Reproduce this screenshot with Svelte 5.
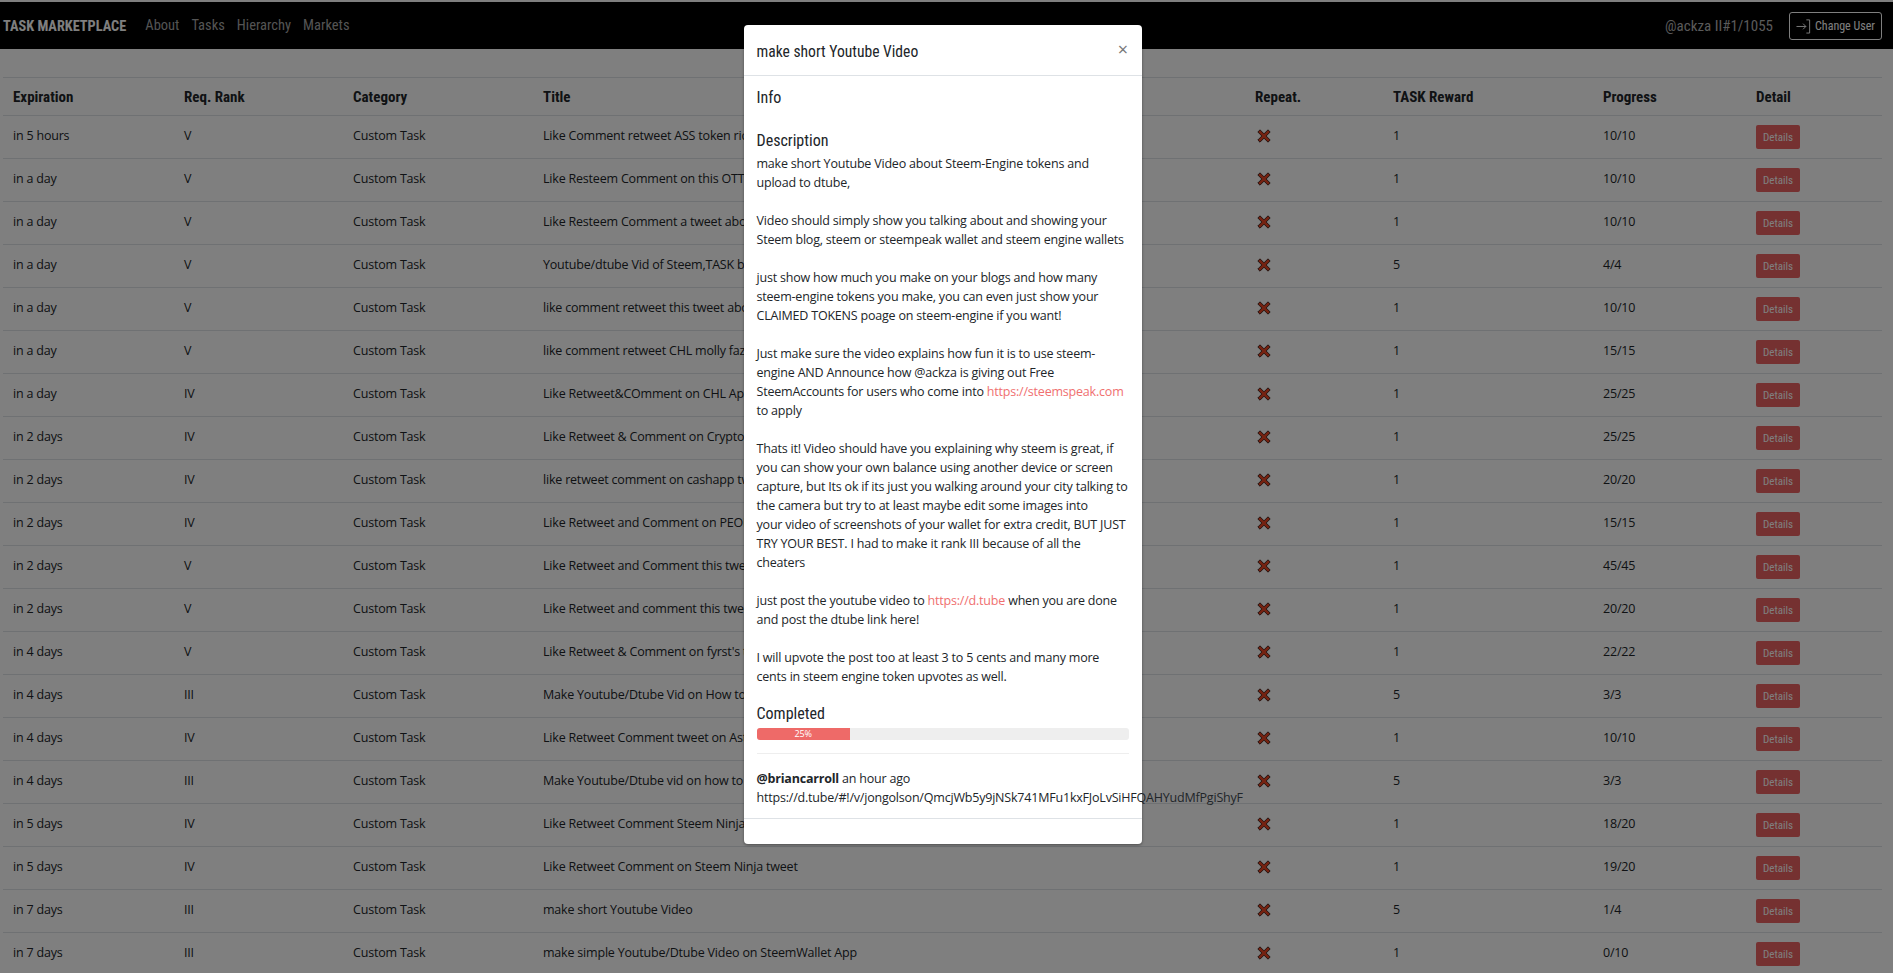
<script>
  const rows = [
    ['in 5 hours', 'V', 'Like Comment retweet ASS token rich list', '1', '10/10'],
    ['in a day', 'V', 'Like Resteem Comment on this OTTP post', '1', '10/10'],
    ['in a day', 'V', 'Like Resteem Comment a tweet about steem', '1', '10/10'],
    ['in a day', 'V', 'Youtube/dtube Vid of Steem,TASK blog', '5', '4/4'],
    ['in a day', 'V', 'like comment retweet this tweet about', '1', '10/10'],
    ['in a day', 'V', 'like comment retweet CHL molly fazio', '1', '15/15'],
    ['in a day', 'IV', 'Like Retweet&COmment on CHL App tweet', '1', '25/25'],
    ['in 2 days', 'IV', 'Like Retweet & Comment on CryptoTweet', '1', '25/25'],
    ['in 2 days', 'IV', 'like retweet comment on cashapp tweet', '1', '20/20'],
    ['in 2 days', 'IV', 'Like Retweet and Comment on PEOPLE', '1', '15/15'],
    ['in 2 days', 'V', 'Like Retweet and Comment this tweet', '1', '45/45'],
    ['in 2 days', 'V', 'Like Retweet and comment this tweet', '1', '20/20'],
    ['in 4 days', 'V', "Like Retweet & Comment on fyrst's tweet", '1', '22/22'],
    ['in 4 days', 'III', 'Make Youtube/Dtube Vid on How to use', '5', '3/3'],
    ['in 4 days', 'IV', 'Like Retweet Comment tweet on Asteria', '1', '10/10'],
    ['in 4 days', 'III', 'Make Youtube/Dtube vid on how to earn', '5', '3/3'],
    ['in 5 days', 'IV', 'Like Retweet Comment Steem Ninja tweet', '1', '18/20'],
    ['in 5 days', 'IV', 'Like Retweet Comment on Steem Ninja tweet', '1', '19/20'],
    ['in 7 days', 'III', 'make short Youtube Video', '5', '1/4'],
    ['in 7 days', 'III', 'make simple Youtube/Dtube Video on SteemWallet App', '1', '0/10']
  ]
</script>

<div class="page">
  <nav class="topbar">
    <a class="brand" href="#top">TASK MARKETPLACE</a>
    <a class="link" href="#about">About</a>
    <a class="link" href="#tasks">Tasks</a>
    <a class="link" href="#hierarchy">Hierarchy</a>
    <a class="link" href="#markets">Markets</a>
    <span class="user">@ackza II#1/1055</span>
    <button class="change">
      <svg width="16" height="16" viewBox="0 0 16 16" fill="none" stroke="currentColor" stroke-width="1">
        <path d="M.5 8.5h10M7.5 5.5l3 3-3 3M11 1.5h3.5v14H11" />
      </svg>
      Change User
    </button>
  </nav>

  <div class="wrap">
    <table>
      <thead>
        <tr>
          <th class="c1">Expiration</th>
          <th class="c2">Req. Rank</th>
          <th class="c3">Category</th>
          <th class="c4">Title</th>
          <th class="c5">Repeat.</th>
          <th class="c6">TASK Reward</th>
          <th class="c7">Progress</th>
          <th>Detail</th>
        </tr>
      </thead>
      <tbody>
        {#each rows as row}
          <tr>
            <td>{row[0]}</td>
            <td>{row[1]}</td>
            <td>Custom Task</td>
            <td>{row[2]}</td>
            <td>
              <svg class="cross" width="14" height="14" viewBox="0 0 14 14">
                <path d="M3 .8 7 4.8 11 .8 13.2 3 9.2 7l4 4-2.2 2.2-4-4-4 4L.8 11l4-4-4-4z" />
              </svg>
            </td>
            <td>{row[3]}</td>
            <td>{row[4]}</td>
            <td><button class="details">Details</button></td>
          </tr>
        {/each}
      </tbody>
    </table>
  </div>

  <div class="backdrop"></div>

  <div class="modal">
    <header>
      <h5>make short Youtube Video</h5>
      <span class="close">×</span>
    </header>
    <div class="body">
      <h6 class="info">Info</h6>
      <h6>Description</h6>
      <p>make short Youtube Video about Steem-Engine tokens and upload to dtube,<br /><br />Video should simply show you talking about and showing your Steem blog, steem or steempeak wallet and steem engine wallets<br /><br />just show how much you make on your blogs and how many steem-engine tokens you make, you can even just show your CLAIMED TOKENS poage on steem-engine if you want!<br /><br />Just make sure the video explains how fun it is to use steem-engine AND Announce how @ackza is giving out Free SteemAccounts for users who come into <a href="#s">https://steemspeak.com</a> to apply<br /><br />Thats it! Video should have you explaining why steem is great, if you can show your own balance using another device or screen capture, but Its ok if its just you walking around your city talking to the camera but try to at least maybe edit some images into<br />your video of screenshots of your wallet for extra credit, BUT JUST<br />TRY YOUR BEST. I had to make it rank III because of all the<br />cheaters<br /><br />just post the youtube video to <a href="#d">https://d.tube</a> when you are done and post the dtube link here!<br /><br />I will upvote the post too at least 3 to 5 cents and many more cents in steem engine token upvotes as well.</p>
      <h6 class="done">Completed</h6>
      <div class="track"><div class="fill" style="width: 25%">25%</div></div>
      <hr />
      <div class="comment"><b>@briancarroll</b> an hour ago</div>
      <div class="url">https://d.tube/#!/v/jongolson/QmcjWb5y9jNSk741MFu1kxFJoLvSiHFQAHYudMfPgiShyF</div>
    </div>
    <footer></footer>
  </div>
</div>

<style>
  :global(body) {
    margin: 0;
    background: #fff;
    overflow: hidden;
  }

  .page {
    position: relative;
    height: 973px;
    overflow: hidden;
    padding-top: 2px;
    box-sizing: border-box;
    font-family: 'Open Sans', sans-serif;
    font-size: 12.5px;
    letter-spacing: -0.2px;
    color: #212529;
  }

  .topbar {
    display: flex;
    align-items: center;
    height: 47px;
    background: #000;
    padding: 0 11px 0 3px;
    font-family: 'Roboto', sans-serif;
    font-stretch: 75%;
    font-size: 15px;
    letter-spacing: 0;
  }

  .brand {
    color: #fff;
    font-size: 14.3px;
    font-weight: 700;
    text-decoration: none;
    margin-right: 19px;
  }

  .link {
    color: #a8a8a8;
    font-size: 14.5px;
    text-decoration: none;
    margin-right: 12px;
  }

  .user {
    margin-left: auto;
    margin-right: 16px;
    color: #b4b4b4;
  }

  .change {
    display: flex;
    align-items: center;
    gap: 4px;
    width: 93px;
    height: 28px;
    padding: 0 6px;
    background: none;
    border: 1px solid #fff;
    border-radius: 3px;
    color: #fff;
    font: 12px 'Roboto', sans-serif;
    font-stretch: 75%;
    white-space: nowrap;
  }

  .wrap {
    padding: 28px 11px 0 3px;
  }

  table {
    width: 100%;
    border-collapse: collapse;
    table-layout: fixed;
  }

  th {
    height: 37px;
    padding: 0 10px;
    text-align: left;
    font-family: 'Roboto', sans-serif;
    font-stretch: 75%;
    font-size: 15px;
    font-weight: 700;
    letter-spacing: 0;
    border-top: 1px solid #dee2e6;
    border-bottom: 1px solid #dee2e6;
  }

  .c1 { width: 151px; }
  .c2 { width: 149px; }
  .c3 { width: 170px; }
  .c4 { width: 692px; }
  .c5 { width: 118px; }
  .c6 { width: 190px; }
  .c7 { width: 133px; }

  td {
    height: 39px;
    padding: 0 10px 3px;
    border-bottom: 1px solid #dee2e6;
    white-space: nowrap;
    overflow: hidden;
  }

  .cross {
    display: block;
    margin-left: 2px;
    fill: #e84422;
    stroke: #000;
    stroke-width: 0.7;
  }

  .details {
    display: block;
    width: 44px;
    height: 24px;
    padding: 0;
    margin-top: 3px;
    background: #ea6262;
    border: 0;
    border-radius: 2px;
    color: #fff;
    font: 11px 'Roboto', sans-serif;
    font-stretch: 75%;
  }

  .backdrop {
    position: absolute;
    inset: 0;
    background: rgba(0, 0, 0, 0.5);
  }

  .modal {
    position: absolute;
    left: 744px;
    top: 25px;
    width: 398px;
    height: 819px;
    display: flex;
    flex-direction: column;
    background: #fff;
    border-radius: 4px;
    box-shadow: 0 1px 3px rgba(0, 0, 0, 0.4);
  }

  header {
    display: flex;
    flex-shrink: 0;
    align-items: center;
    justify-content: space-between;
    box-sizing: border-box;
    height: 51px;
    padding: 4px 14px 0 12.5px;
    border-bottom: 1px solid #dee2e6;
    letter-spacing: 0;
  }

  h5 {
    margin: 0;
    font: 400 15.6px 'Roboto', sans-serif;
    font-stretch: 75%;
  }

  h6 {
    margin: 0;
    font: 400 16px/22px 'Roboto', sans-serif;
    font-stretch: 75%;
    letter-spacing: 0;
  }

  .close {
    margin-top: -6px;
    font-size: 18px;
    color: #777;
  }

  .body {
    flex: 1;
    min-height: 0;
    padding: 11px 13px 0 12.5px;
  }

  .info {
    margin-bottom: 21px;
  }

  p {
    margin: 2px 0 17px;
    line-height: 19px;
  }

  a {
    color: #f07070;
    text-decoration: none;
  }

  .track {
    height: 12px;
    margin-top: 3px;
    border-radius: 3px;
    background: #eee;
    overflow: hidden;
  }

  .fill {
    height: 100%;
    background: #ee6a68;
    color: #fff;
    font-size: 9px;
    line-height: 12px;
    text-align: center;
  }

  hr {
    margin: 13px 0 15px;
    border: 0;
    border-top: 1px solid #eee;
  }

  .comment,
  .url {
    line-height: 19px;
    white-space: nowrap;
  }

  footer {
    height: 25px;
    flex-shrink: 0;
    border-top: 1px solid #dee2e6;
  }
</style>
